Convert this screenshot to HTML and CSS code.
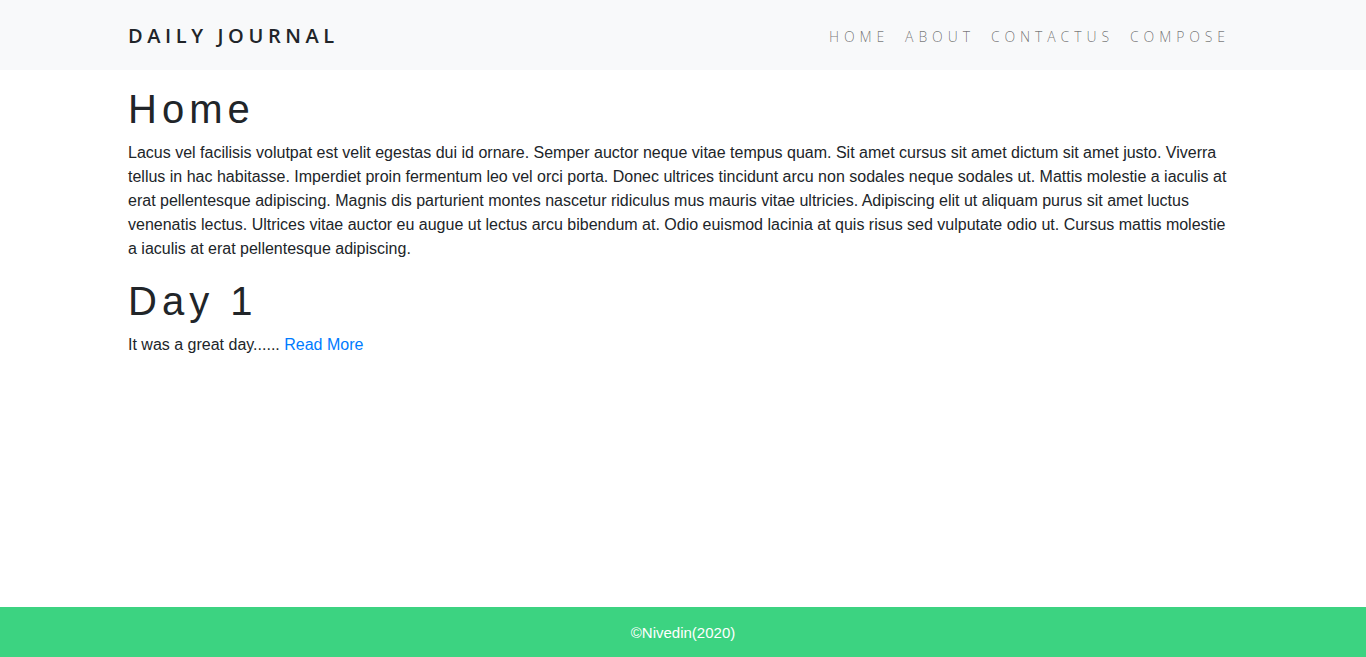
FILE: index.html
```html
<!DOCTYPE html>
<html>
<head>
<meta charset="utf-8">
<link rel="stylesheet" href="styles.css">
</head>
<body>
<nav class="navbar">
  <div class="container nav-inner">
    <span class="brand">DAILY JOURNAL</span>
    <ul class="nav-links">
      <li><a href="#">HOME</a></li>
      <li><a href="#">ABOUT</a></li>
      <li><a href="#">CONTACTUS</a></li>
      <li><a href="#">COMPOSE</a></li>
    </ul>
  </div>
</nav>
<main class="container content">
  <h1>Home</h1>
  <p>Lacus vel facilisis volutpat est velit egestas dui id ornare. Semper auctor neque vitae tempus quam. Sit amet cursus sit amet dictum sit amet justo. Viverra tellus in hac habitasse. Imperdiet proin fermentum leo vel orci porta. Donec ultrices tincidunt arcu non sodales neque sodales ut. Mattis molestie a iaculis at erat pellentesque adipiscing. Magnis dis parturient montes nascetur ridiculus mus mauris vitae ultricies. Adipiscing elit ut aliquam purus sit amet luctus venenatis lectus. Ultrices vitae auctor eu augue ut lectus arcu bibendum at. Odio euismod lacinia at quis risus sed vulputate odio ut. Cursus mattis molestie a iaculis at erat pellentesque adipiscing.</p>
  <h1>Day 1</h1>
  <p>It was a great day...... <a href="#" class="more">Read More</a></p>
</main>
<footer class="footer">©Nivedin(2020)</footer>
</body>
</html>
```
FILE: styles.css
```css
* { box-sizing: border-box; }
body {
  margin: 0;
  font-family: "Liberation Sans", Arial, sans-serif;
  font-size: 16px;
  line-height: 1.5;
  color: #212529;
  background: #fff;
}
.container {
  width: 1140px;
  margin: 0 auto;
  padding: 0 15px;
}
.navbar {
  background: #f8f9fa;
  height: 70px;
}
.nav-inner {
  height: 70px;
  padding-top: 2px;
  display: flex;
  align-items: center;
  justify-content: space-between;
}
.brand {
  font-family: "Open Sans", sans-serif;
  font-weight: 600;
  font-size: 20px;
  letter-spacing: 4.6px;
  color: #212529;
}
.nav-links {
  display: flex;
  list-style: none;
  margin: 0;
  padding: 0;
}
.nav-links li a {
  display: block;
  padding: 8px;
  font-family: "Open Sans", sans-serif;
  font-weight: 300;
  font-size: 14px;
  letter-spacing: 4.9px;
  color: rgba(0,0,0,0.55);
  text-decoration: none;
}
.content h1 {
  font-size: 40px;
  font-weight: 400;
  letter-spacing: 5px;
  line-height: 1.2;
  margin: 15px 0 8px;
}
.content p {
  margin: 0 0 16px;
}
.more {
  color: #007bff;
  text-decoration: none;
}
.footer {
  position: fixed;
  left: 0;
  right: 0;
  bottom: 0;
  height: 50px;
  padding-top: 1px;
  background: #3cd381;
  color: #fff;
  text-align: center;
  line-height: 50px;
  font-size: 15px;
}
```
